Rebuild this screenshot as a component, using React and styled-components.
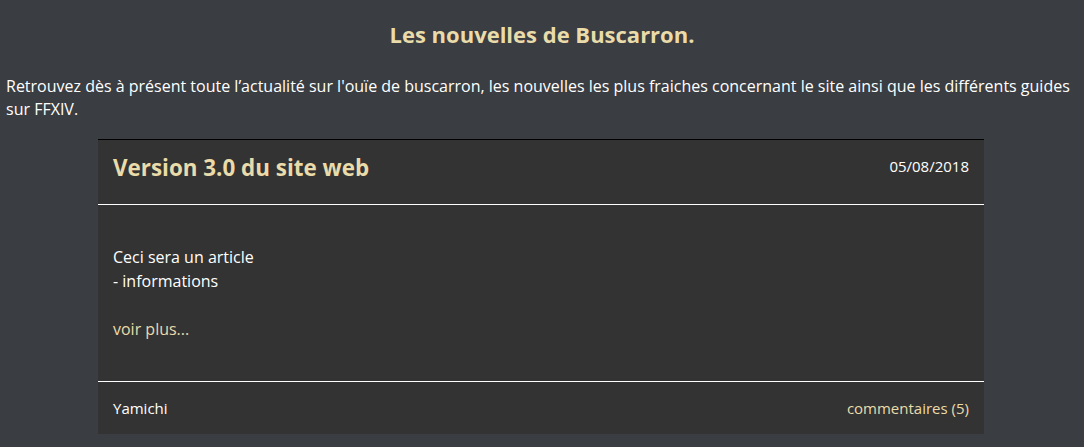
import React from "react";
import styled, { createGlobalStyle } from "styled-components";

const GlobalStyle = createGlobalStyle`
  html, body {
    margin: 0;
    padding: 0;
    background: #3a3d41;
    font-family: "Open Sans", "Noto Sans", sans-serif;
    color: #ffffff;
  }
`;

const Page = styled.div`
  padding: 19px 0 14px;
`;

const Title = styled.h1`
  margin: 0;
  text-align: center;
  font-size: 22px;
  line-height: 30px;
  font-weight: 700;
  color: #eadbaa;
`;

const Intro = styled.p`
  margin: 26px 0 0;
  padding: 0 6px;
  font-size: 16px;
  line-height: 23px;
`;

const Card = styled.article`
  width: 886px;
  margin: 18px 0 0 98px;
  background: #333333;
  border-top: 1px solid #000000;
`;

const CardHeader = styled.header`
  display: flex;
  justify-content: space-between;
  align-items: flex-start;
  height: 65px;
  box-sizing: border-box;
  padding: 13px 15px 0;
  border-bottom: 1px solid #ffffff;
`;

const CardTitle = styled.h2`
  margin: 0;
  font-size: 22.4px;
  line-height: 30px;
  font-weight: 700;
  color: #eadbaa;
`;

const Small = styled.span`
  font-size: 15px;
  line-height: 20px;
  color: ${p => (p.$accent ? "#eadbaa" : "#ffffff")};
  margin-top: ${p => p.$offset || 0}px;
`;

const CardBody = styled.div`
  padding: 40px 15px;
  border-bottom: 1px solid #ffffff;
  font-size: 16px;
  line-height: 24px;
`;

const Line = styled.div`
  min-height: 24px;
`;

const More = styled.a`
  color: #eadbaa;
  text-decoration: none;
`;

const CardFooter = styled.footer`
  display: flex;
  justify-content: space-between;
  align-items: center;
  height: 52px;
  padding: 0 15px;
  box-sizing: border-box;
`;

export default function App() {
  return (
    <Page>
      <GlobalStyle />
      <Title>Les nouvelles de Buscarron.</Title>
      <Intro>
        Retrouvez dès à présent toute l’actualité sur l'ouïe de buscarron, les
        nouvelles les plus fraiches concernant le site ainsi que les différents
        guides sur FFXIV.
      </Intro>
      <Card>
        <CardHeader>
          <CardTitle>Version 3.0 du site web</CardTitle>
          <Small $offset={3}>05/08/2018</Small>
        </CardHeader>
        <CardBody>
          <Line>Ceci sera un article</Line>
          <Line>- informations</Line>
          <Line />
          <Line>
            <More href="#">voir plus...</More>
          </Line>
        </CardBody>
        <CardFooter>
          <Small>Yamichi</Small>
          <Small $accent>commentaires (5)</Small>
        </CardFooter>
      </Card>
    </Page>
  );
}
